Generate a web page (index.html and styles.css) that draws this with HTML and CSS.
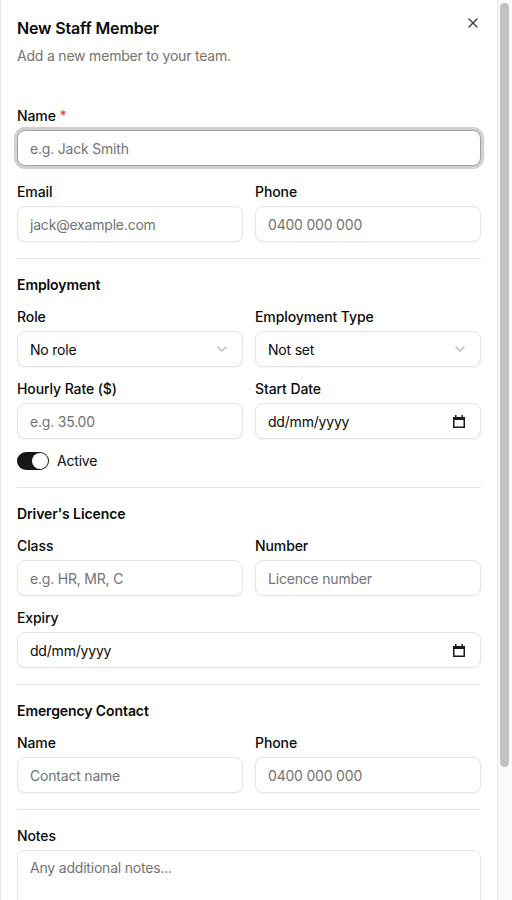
FILE: index.html
```html
<!DOCTYPE html>
<html lang="en">
<head>
<meta charset="utf-8">
<title>New Staff Member</title>
<link rel="stylesheet" href="styles.css">
</head>
<body>
<div class="frame">
<div class="dialog">
  <div class="header">
    <h2 class="title">New Staff Member</h2>
    <p class="desc">Add a new member to your team.</p>
    <button class="close" aria-label="Close">
      <svg width="16" height="16" viewBox="0 0 24 24" fill="none" stroke="currentColor" stroke-width="2" stroke-linecap="round" stroke-linejoin="round"><path d="M18 6 6 18"/><path d="m6 6 12 12"/></svg>
    </button>
  </div>

  <form class="form">
    <div class="field">
      <label class="label">Name <span class="req">*</span></label>
      <div class="input focus"><span class="ph">e.g. Jack Smith</span></div>
    </div>
    <div class="row">
      <div class="field">
        <label class="label">Email</label>
        <div class="input"><span class="ph">jack@example.com</span></div>
      </div>
      <div class="field">
        <label class="label">Phone</label>
        <div class="input"><span class="ph">0400 000 000</span></div>
      </div>
    </div>

    <hr class="sep">

    <section class="section">
      <h3 class="heading">Employment</h3>
      <div class="row">
        <div class="field">
          <label class="label">Role</label>
          <div class="input select"><span class="val">No role</span>
            <svg class="chev" width="16" height="16" viewBox="0 0 24 24" fill="none" stroke="currentColor" stroke-width="2" stroke-linecap="round" stroke-linejoin="round"><path d="m6 9 6 6 6-6"/></svg>
          </div>
        </div>
        <div class="field">
          <label class="label">Employment Type</label>
          <div class="input select"><span class="val">Not set</span>
            <svg class="chev" width="16" height="16" viewBox="0 0 24 24" fill="none" stroke="currentColor" stroke-width="2" stroke-linecap="round" stroke-linejoin="round"><path d="m6 9 6 6 6-6"/></svg>
          </div>
        </div>
      </div>
      <div class="row">
        <div class="field">
          <label class="label">Hourly Rate ($)</label>
          <div class="input"><span class="ph">e.g. 35.00</span></div>
        </div>
        <div class="field">
          <label class="label">Start Date</label>
          <div class="input date"><span class="val">dd/mm/yyyy</span>
            <svg class="cal" width="12" height="13" viewBox="0 0 12 13"><path d="M2 0h1.5v2h5V0H10v2h2v11H0V2h2z M1.5 5v6.5h9V5z" fill="#1a1a1a" fill-rule="evenodd"/></svg>
          </div>
        </div>
      </div>
      <div class="switch-row">
        <span class="switch"><span class="knob"></span></span>
        <span class="switch-label">Active</span>
      </div>
    </section>

    <hr class="sep">

    <section class="section">
      <h3 class="heading">Driver's Licence</h3>
      <div class="row">
        <div class="field">
          <label class="label">Class</label>
          <div class="input"><span class="ph">e.g. HR, MR, C</span></div>
        </div>
        <div class="field">
          <label class="label">Number</label>
          <div class="input"><span class="ph">Licence number</span></div>
        </div>
      </div>
      <div class="field">
        <label class="label">Expiry</label>
        <div class="input date"><span class="val">dd/mm/yyyy</span>
          <svg class="cal" width="12" height="13" viewBox="0 0 12 13"><path d="M2 0h1.5v2h5V0H10v2h2v11H0V2h2z M1.5 5v6.5h9V5z" fill="#1a1a1a" fill-rule="evenodd"/></svg>
        </div>
      </div>
    </section>

    <hr class="sep">

    <section class="section">
      <h3 class="heading">Emergency Contact</h3>
      <div class="row">
        <div class="field">
          <label class="label">Name</label>
          <div class="input"><span class="ph">Contact name</span></div>
        </div>
        <div class="field">
          <label class="label">Phone</label>
          <div class="input"><span class="ph">0400 000 000</span></div>
        </div>
      </div>
    </section>

    <hr class="sep">

    <div class="field">
      <label class="label">Notes</label>
      <div class="input textarea"><span class="ph">Any additional notes...</span></div>
    </div>
  </form>
</div>
<div class="scrollbar"><div class="thumb"></div></div>
</div>
</body>
</html>
```

FILE: styles.css
```css
* { box-sizing: border-box; }
html, body { margin: 0; padding: 0; height: 100%; overflow: hidden; }
body {
  font-family: Inter, "Noto Sans", "Liberation Sans", sans-serif;
  color: #0a0a0a;
  background: #ffffff;
}
.frame {
  display: flex;
  height: 900px;
  overflow: hidden;
}
.dialog {
  flex: 1;
  min-width: 0;
  border-left: 1px solid #e5e5e5;
  padding: 18px 16px 0 16px;
  position: relative;
}
.scrollbar {
  width: 15px;
  flex: none;
  background: #fafafa;
  border-left: 1px solid #e8e8e8;
  padding: 3px 3px 0 2px;
}
.thumb {
  width: 9px;
  height: 764px;
  border-radius: 5px;
  background: #c1c1c1;
}
.header {
  display: flex;
  flex-direction: column;
  gap: 8px;
  margin-bottom: 40px;
}
.title {
  margin: 0;
  font-size: 16px;
  line-height: 20px;
  font-weight: 600;
  letter-spacing: -0.15px;
}
.desc {
  margin: 0;
  font-size: 14px;
  line-height: 20px;
  color: #737373;
  letter-spacing: -0.2px;
}
.close {
  position: absolute;
  top: 15px;
  right: 16px;
  width: 16px;
  height: 16px;
  padding: 0;
  border: 0;
  background: none;
  color: #404040;
  display: flex;
}
.form {
  display: flex;
  flex-direction: column;
  gap: 16px;
}
.section {
  display: flex;
  flex-direction: column;
  gap: 12px;
}
.row {
  display: grid;
  grid-template-columns: 1fr 1fr;
  gap: 12px;
}
.field {
  display: flex;
  flex-direction: column;
  gap: 4px;
  min-width: 0;
}
.label {
  font-size: 14px;
  line-height: 20px;
  font-weight: 500;
  letter-spacing: -0.1px;
}
.req { color: #ef4444; }
.heading {
  margin: 0;
  font-size: 14px;
  line-height: 20px;
  font-weight: 600;
  letter-spacing: -0.1px;
}
.input {
  height: 36px;
  border: 1px solid #e5e5e5;
  border-radius: 8px;
  background: #fff;
  box-shadow: 0 1px 2px rgba(0,0,0,0.05);
  padding: 0 12px;
  display: flex;
  align-items: center;
  font-size: 14px;
  letter-spacing: -0.2px;
}
.input.focus {
  border-color: #a3a3a3;
  box-shadow: 0 0 0 3px rgba(163,163,163,0.5);
}
.ph { color: #737373; }
.val { color: #0a0a0a; }
.select, .date { justify-content: space-between; }
.chev { color: #737373; opacity: 0.5; }
.date { padding-right: 15px; }
.switch-row {
  display: flex;
  align-items: center;
  gap: 8px;
  font-size: 14px;
  line-height: 20px;
  letter-spacing: -0.2px;
}
.switch {
  width: 32px;
  height: 18px;
  border-radius: 9px;
  background: #171717;
  display: flex;
  align-items: center;
  justify-content: flex-end;
  padding: 1px;
}
.knob {
  width: 16px;
  height: 16px;
  border-radius: 50%;
  background: #fff;
}
.sep {
  margin: 0;
  border: 0;
  height: 1px;
  background: #e5e5e5;
}
.textarea {
  height: 80px;
  align-items: flex-start;
  padding-top: 8px;
}
```
